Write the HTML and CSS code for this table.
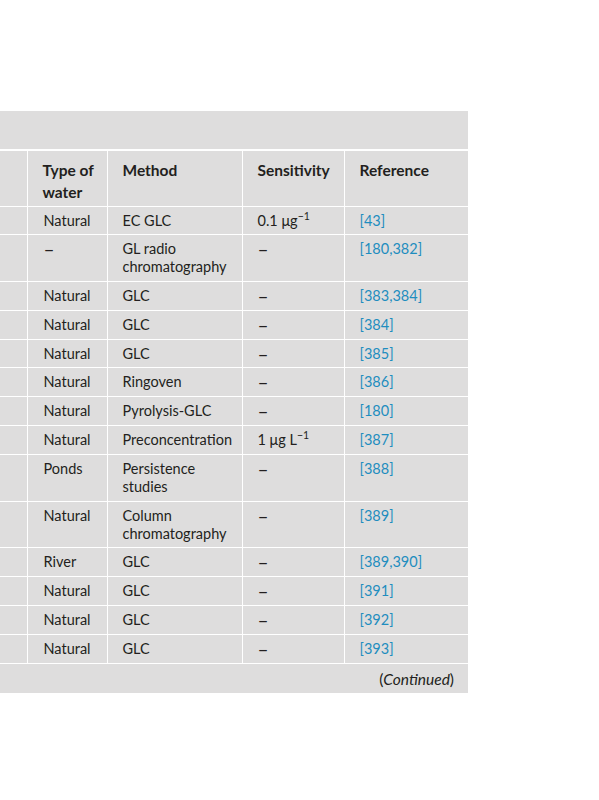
FILE: index.html
```html
<!DOCTYPE html>
<html lang="en">
<head>
<meta charset="utf-8">
<title>Table</title>
<link rel="stylesheet" href="styles.css">
</head>
<body>
<div class="sheet">
  <div class="caption"></div>
  <table class="data">
    <colgroup>
      <col class="c1"><col class="c2"><col class="c3"><col class="c4"><col class="c5">
    </colgroup>
    <thead>
      <tr>
        <th></th>
        <th>Type of water</th>
        <th>Method</th>
        <th>Sensitivity</th>
        <th>Reference</th>
      </tr>
    </thead>
    <tbody>
      <tr><td></td><td>Natural</td><td>EC GLC</td><td>0.1 μg<sup>−1</sup></td><td><a>[43]</a></td></tr>
      <tr><td></td><td><span class="dash">–</span></td><td>GL radio chromatography</td><td><span class="dash">–</span></td><td><a>[180,382]</a></td></tr>
      <tr><td></td><td>Natural</td><td>GLC</td><td><span class="dash">–</span></td><td><a>[383,384]</a></td></tr>
      <tr><td></td><td>Natural</td><td>GLC</td><td><span class="dash">–</span></td><td><a>[384]</a></td></tr>
      <tr><td></td><td>Natural</td><td>GLC</td><td><span class="dash">–</span></td><td><a>[385]</a></td></tr>
      <tr><td></td><td>Natural</td><td>Ringoven</td><td><span class="dash">–</span></td><td><a>[386]</a></td></tr>
      <tr><td></td><td>Natural</td><td>Pyrolysis-GLC</td><td><span class="dash">–</span></td><td><a>[180]</a></td></tr>
      <tr><td></td><td>Natural</td><td>Preconcentration</td><td>1 μg L<sup>−1</sup></td><td><a>[387]</a></td></tr>
      <tr><td></td><td>Ponds</td><td>Persistence studies</td><td><span class="dash">–</span></td><td><a>[388]</a></td></tr>
      <tr><td></td><td>Natural</td><td>Column chromatography</td><td><span class="dash">–</span></td><td><a>[389]</a></td></tr>
      <tr><td></td><td>River</td><td>GLC</td><td><span class="dash">–</span></td><td><a>[389,390]</a></td></tr>
      <tr><td></td><td>Natural</td><td>GLC</td><td><span class="dash">–</span></td><td><a>[391]</a></td></tr>
      <tr><td></td><td>Natural</td><td>GLC</td><td><span class="dash">–</span></td><td><a>[392]</a></td></tr>
      <tr><td></td><td>Natural</td><td>GLC</td><td><span class="dash">–</span></td><td><a>[393]</a></td></tr>
    </tbody>
    <tfoot>
      <tr><td colspan="5" class="cont">(<em>Continued</em>)</td></tr>
    </tfoot>
  </table>
</div>
</body>
</html>
```

FILE: styles.css
```css
html, body {
  margin: 0;
  padding: 0;
  background: #ffffff;
}

body {
  font-family: Lato, "Open Sans", sans-serif;
  font-size: 14.5px;
  color: #231f20;
}

.sheet {
  margin-top: 111px;
  width: 468px;
  background: #dedddd;
}

.caption {
  height: 38px;
  border-bottom: 2px solid #ffffff;
}

.data {
  width: 468px;
  border-collapse: collapse;
  table-layout: fixed;
}

.c1 { width: 27px; }
.c2 { width: 80px; }
.c3 { width: 135px; }
.c4 { width: 102px; }
.c5 { width: 124px; }

.data th,
.data td {
  text-align: left;
  vertical-align: top;
  padding: 5px 6px 4.8px 15px;
  line-height: 18px;
  border: 1px solid #ffffff;
}

.data th {
  font-weight: 700;
  font-size: 15.5px;
  line-height: 22px;
  padding-top: 7.5px;
  padding-bottom: 3px;
  border-top: none;
}

.data tr > :first-child { border-left: none; }
.data tr > :last-child { border-right: none; }

.data td:nth-child(2) { padding-left: 16px; }

.dash {
  display: inline-block;
  vertical-align: top;
  height: 18px;
  font-size: 19px;
  line-height: 17px;
}

.data sup {
  font-size: 10.5px;
  line-height: 0;
  vertical-align: 6px;
}

.data a {
  color: #1f8dbf;
  text-decoration: none;
}

.data .cont {
  text-align: right;
  font-size: 15.5px;
  padding: 6px 14px 5px 0;
  border-bottom: none;
}
```
